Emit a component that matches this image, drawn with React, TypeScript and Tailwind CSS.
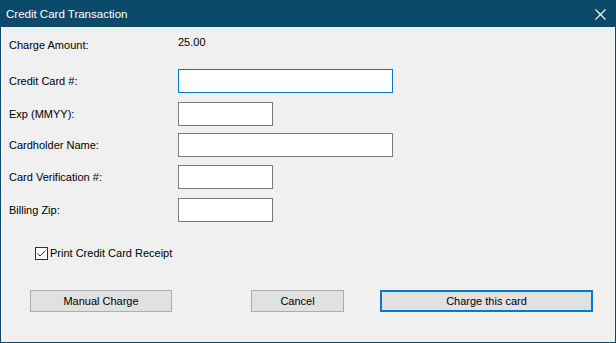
import React from 'react';

const font = { fontFamily: '"Liberation Sans", Arial, sans-serif' };

const Field: React.FC<{ label: string; wide?: boolean; focused?: boolean; className?: string }> = ({
  label,
  wide,
  focused,
  className,
}) => (
  <div className={`flex items-center h-[24px] ${className ?? ''}`}>
    <div className="w-[169px] text-[11px] text-black">{label}</div>
    <div
      className={`h-[24px] bg-white border ${wide ? 'w-[215px]' : 'w-[95px]'} ${
        focused ? 'border-[#0078d7]' : 'border-[#7a7a7a]'
      }`}
    />
  </div>
);

export default function App() {
  return (
    <div
      className="w-[616px] h-[343px] flex flex-col bg-[#f0f0f0] border border-[#0b4a6b] text-black select-none"
      style={font}
    >
      {/* title bar */}
      <div className="h-[26px] bg-[#0b4a6b] flex items-center justify-between pl-[5px] pr-[9px] text-white">
        <span className="text-[11.5px] leading-none pt-[1px]">Credit Card Transaction</span>
        <svg width="11" height="11" viewBox="0 0 11 11" className="mt-[1px]">
          <path d="M0.5 0.5 L10.5 10.5 M10.5 0.5 L0.5 10.5" stroke="white" strokeWidth="1.1" />
        </svg>
      </div>

      {/* form */}
      <div className="flex flex-col pl-[8px] pt-[7px]">
        <div className="flex h-[20px] text-[11px]">
          <div className="w-[169px] pt-[3px]">Charge Amount:</div>
          <div>25.00</div>
        </div>

        <Field label="Credit Card #:" wide focused className="mt-[15px]" />
        <Field label="Exp (MMYY):" className="mt-[9px]" />
        <Field label="Cardholder Name:" wide className="mt-[7px]" />
        <Field label="Card Verification #:" className="mt-[8px]" />
        <Field label="Billing Zip:" className="mt-[9px]" />

        <label className="flex items-center h-[13px] mt-[25px] ml-[26px] text-[11px]">
          <span className="w-[13px] h-[13px] border border-[#333] bg-white flex items-center justify-center">
            <svg width="11" height="11" viewBox="0 0 11 11">
              <path d="M1.5 5.5 L4 8 L9.5 2.5" stroke="#333" strokeWidth="1" fill="none" />
            </svg>
          </span>
          <span className="ml-[2px]">Print Credit Card Receipt</span>
        </label>

        <div className="flex mt-[30px] ml-[21px] text-[11px]">
          <button className="w-[142px] h-[22px] bg-[#e1e1e1] border border-[#adadad]">Manual Charge</button>
          <button className="w-[93px] h-[22px] ml-[79px] bg-[#e1e1e1] border border-[#adadad]">Cancel</button>
          <button className="w-[213px] h-[22px] ml-[36px] bg-[#e1e1e1] border-2 border-[#0078d7]">
            Charge this card
          </button>
        </div>
      </div>
    </div>
  );
}
